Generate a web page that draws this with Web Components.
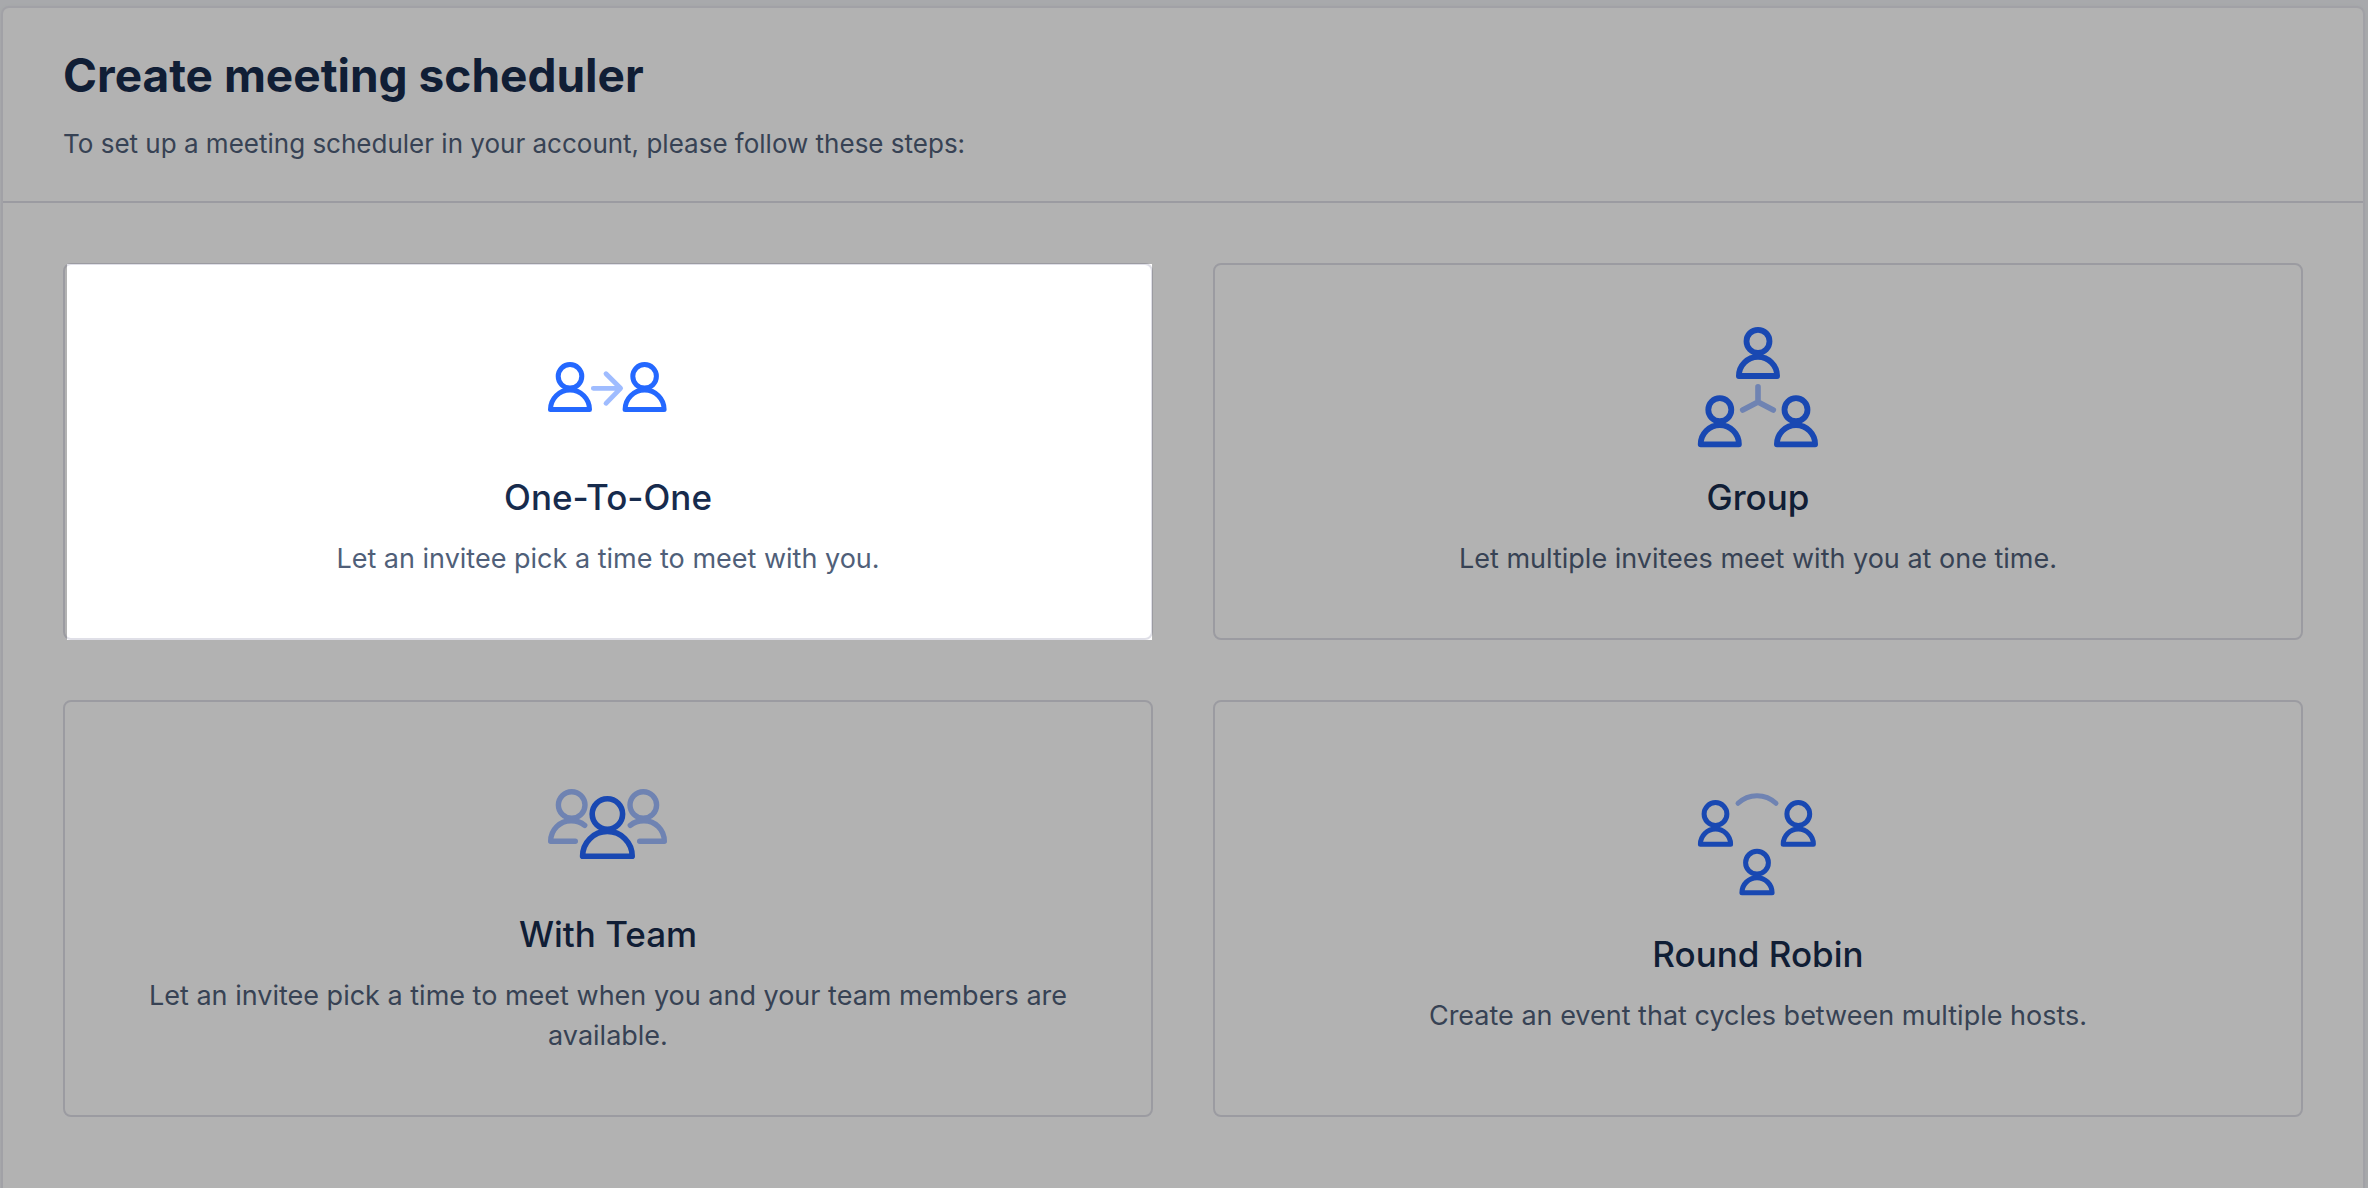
<!DOCTYPE html>
<html lang="en">
<head>
<meta charset="utf-8">
<title>Create meeting scheduler</title>
<style>
  html, body { margin: 0; }
  body {
    box-sizing: border-box;
    min-height: 100vh;
    padding: 6px 3px 0 1px;
    display: flex;
    overflow: hidden;
    background: #f1f3f6;
    font-family: Inter, "Liberation Sans", sans-serif;
    color: #172b4d;
    --line: #dfdfe7;
    --muted: #505f79;
    --accent: #2468ff;
  }
  html { overflow: hidden; }
</style>
</head>
<body>
<scheduler-panel>
  <span slot="title">Create meeting scheduler</span>
  <span slot="intro">To set up a meeting scheduler in your account, please follow these steps:</span>
  <meeting-option spotlight>
    <meeting-icon slot="icon" kind="one"></meeting-icon>
    <span slot="name">One-To-One</span>
    Let an invitee pick a time to meet with you.
  </meeting-option>
  <meeting-option>
    <meeting-icon slot="icon" kind="group"></meeting-icon>
    <span slot="name">Group</span>
    Let multiple invitees meet with you at one time.
  </meeting-option>
  <meeting-option>
    <meeting-icon slot="icon" kind="team"></meeting-icon>
    <span slot="name">With Team</span>
    Let an invitee pick a time to meet when you and your team members are available.
  </meeting-option>
  <meeting-option>
    <meeting-icon slot="icon" kind="robin"></meeting-icon>
    <span slot="name">Round Robin</span>
    Create an event that cycles between multiple hosts.
  </meeting-option>
</scheduler-panel>

<template id="panel">
  <style>
    :host {
      display: block;
      flex: 1;
      box-sizing: border-box;
      background: #fff;
      border: 2px solid #e7e7ee;
      border-bottom: 0;
      border-radius: 8px 8px 0 0;
      box-shadow: 0 0 4px rgba(40, 50, 90, .03);
    }
    header {
      padding: 40px 60px 37px;
      border-bottom: 2px solid var(--line);
      display: flex;
      flex-direction: column;
      gap: 22px;
    }
    h1 { margin: 0; font-size: 46px; line-height: 54px; font-weight: 700; }
    p { margin: 0; font-size: 26px; line-height: 40px; color: var(--muted); }
    main {
      display: grid;
      grid-template-columns: 1fr 1fr;
      gap: 60px;
      padding: 60px;
    }
  </style>
  <header>
    <h1><slot name="title"></slot></h1>
    <p><slot name="intro"></slot></p>
  </header>
  <main><slot></slot></main>
</template>

<template id="option">
  <style>
    :host { display: grid; }
    button {
      position: relative;
      box-sizing: border-box;
      width: 100%;
      margin: 0;
      padding: 60px 60px 59px;
      border: 2px solid var(--line);
      border-radius: 8px;
      background: #fff;
      font: inherit;
      color: inherit;
      text-align: center;
      cursor: pointer;
      display: flex;
      flex-direction: column;
      align-items: center;
      justify-content: center;
    }
    .name { margin: 28px 0 22px; font-size: 35px; line-height: 40px; font-weight: 500; }
    .text { font-size: 27px; line-height: 40px; color: var(--muted); }
    /* Tour spotlight: its spread shadow dims everything around the card. */
    .spot { display: none; }
    :host([spotlight]) .spot {
      display: block;
      position: absolute;
      inset: -1px -1px -2px 2px;
      box-shadow: 0 0 0 4000px rgba(0, 0, 0, .3);
      z-index: 10;
      pointer-events: none;
    }
  </style>
  <button type="button">
    <slot name="icon"></slot>
    <span class="name"><slot name="name"></slot></span>
    <span class="text"><slot></slot></span>
    <span class="spot"></span>
  </button>
</template>

<script>
  const person = (cx, cy, r, by, h, sw) =>
    `<g stroke-width="${sw}"><circle cx="${cx}" cy="${cy}" r="${r}"/>` +
    `<path d="M${cx - h} ${by}a${h} ${h} 0 0 1 ${2 * h} 0z"/></g>`;

  const icons = {
    one: person(24, 51.3, 11.8, 84.5, 19.5, 5) + person(98.6, 51.3, 11.8, 84.5, 19.5, 5) +
      '<path class="soft" stroke-width="4.8" d="M47.3 63.3H74.4M60 48.7l14.6 14.6L60 78.3"/>',
    group: person(62, 16.3, 11.5, 51, 19.1, 5.8) + person(23.8, 84.7, 11.5, 119.3, 19.1, 5.8) +
      person(100, 84.7, 11.5, 119.3, 19.1, 5.8) +
      '<path class="soft" stroke-width="5.6" d="M62 61.7V77M46.7 85L62 77l15.3 8"/>',
    team: '<g class="soft" stroke-width="5.4"><circle cx="25.7" cy="43" r="13.3"/><circle cx="97.3" cy="43" r="13.3"/>' +
      '<path d="M38.7 63.3C34.5 60 29.5 58.6 24.7 58.8C14 59 4.7 67.5 4.7 79.3H29.3"/>' +
      '<path d="M84.3 63.3C88.5 60 93.5 58.6 98.3 58.8C109 59 118.3 67.5 118.3 79.3H93.7"/></g>' +
      person(61.4, 52, 15.2, 94.2, 24.8, 5.6),
    robin: person(19.5, 32, 11.4, 62.2, 15.1, 5) + person(102.3, 32, 11.4, 62.2, 15.1, 5) +
      person(61, 80.7, 11.4, 110.8, 15.1, 5) +
      '<path class="soft" stroke-width="5" d="M42 21.3a27.5 27.5 0 0 1 38 0"/>'
  };

  const clone = (host, id) => host.attachShadow({ mode: 'open' })
    .append(document.getElementById(id).content.cloneNode(true));

  customElements.define('meeting-icon', class extends HTMLElement {
    constructor() { super(); this.attachShadow({ mode: 'open' }); }
    connectedCallback() {
      this.shadowRoot.innerHTML = `<style>
        :host { display: block; width: 124px; height: 124px; }
        svg { display: block; fill: none; stroke: var(--accent); stroke-linecap: round; stroke-linejoin: round; }
        .soft { stroke: #9fbcff; }
      </style><svg width="124" height="124" viewBox="0 0 124 124" aria-hidden="true">${icons[this.getAttribute('kind')]}</svg>`;
    }
  });
  customElements.define('meeting-option', class extends HTMLElement {
    constructor() { super(); clone(this, 'option'); }
  });
  customElements.define('scheduler-panel', class extends HTMLElement {
    constructor() { super(); clone(this, 'panel'); }
  });
</script>
</body>
</html>
